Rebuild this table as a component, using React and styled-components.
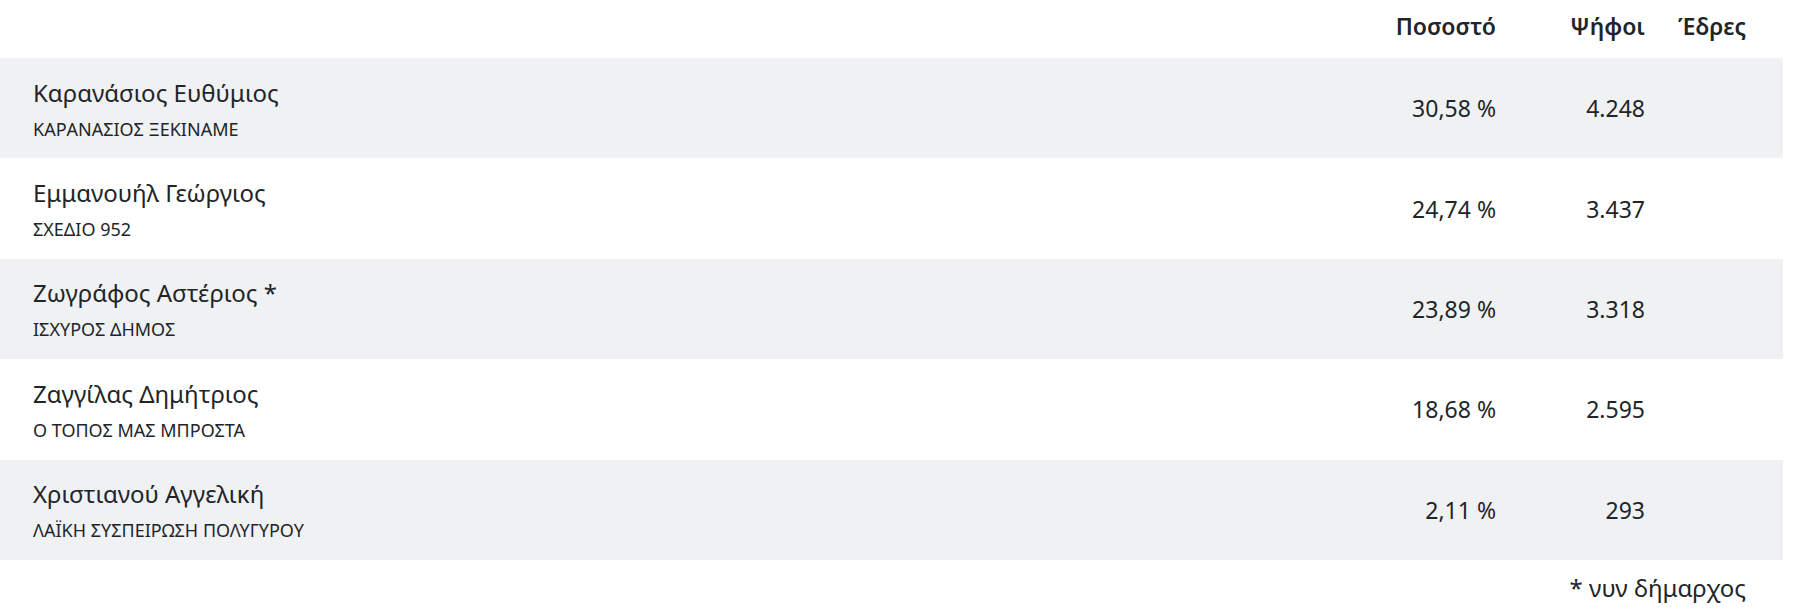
import React from 'react';
import styled, { createGlobalStyle } from 'styled-components';

const GlobalStyle = createGlobalStyle`
  body {
    margin: 0;
    background: #fff;
    font-family: "Noto Sans", "Open Sans", sans-serif;
    color: #212529;
  }
`;

const Table = styled.div`
  width: 1783px;
`;

const Row = styled.div`
  display: grid;
  grid-template-columns: 1fr 160px 149px 101px;
  align-items: center;
  padding: 0 37px 0 33px;
  height: ${(props) => (props.header ? '58px' : '100.4px')};
  background-color: ${(props) => (props.shaded ? '#f0f1f3' : 'transparent')};
`;

const HeadCell = styled.div`
  text-align: right;
  font-size: 23px;
  font-weight: 600;
  padding-bottom: 6px;
`;

const Candidate = styled.div`
  display: flex;
  flex-direction: column;
  padding-top: 2px;
`;

const Name = styled.div`
  font-size: 24px;
  line-height: 32px;
`;

const Party = styled.div`
  font-size: 18px;
  line-height: 26px;
  margin-top: 7px;
`;

const NumCell = styled.div`
  text-align: right;
  font-size: 23px;
`;

const Footnote = styled.div`
  width: 1746px;
  text-align: right;
  font-size: 24px;
  padding-top: 11px;
`;

const results = [
    { name: 'Καρανάσιος Ευθύμιος', party: 'ΚΑΡΑΝΑΣΙΟΣ ΞΕΚΙΝΑΜΕ', pct: '30,58 %', votes: '4.248' },
    { name: 'Εμμανουήλ Γεώργιος', party: 'ΣΧΕΔΙΟ 952', pct: '24,74 %', votes: '3.437' },
    { name: 'Ζωγράφος Αστέριος *', party: 'ΙΣΧΥΡΟΣ ΔΗΜΟΣ', pct: '23,89 %', votes: '3.318' },
    { name: 'Ζαγγίλας Δημήτριος', party: 'Ο ΤΟΠΟΣ ΜΑΣ ΜΠΡΟΣΤΑ', pct: '18,68 %', votes: '2.595' },
    { name: 'Χριστιανού Αγγελική', party: 'ΛΑΪΚΗ ΣΥΣΠΕΙΡΩΣΗ ΠΟΛΥΓΥΡΟΥ', pct: '2,11 %', votes: '293' },
];

function App() {
    return (
        <>
            <GlobalStyle />
            <Table>
                <Row header>
                    <div />
                    <HeadCell>Ποσοστό</HeadCell>
                    <HeadCell>Ψήφοι</HeadCell>
                    <HeadCell>Έδρες</HeadCell>
                </Row>
                {results.map((r, i) => (
                    <Row key={i} shaded={i % 2 === 0}>
                        <Candidate>
                            <Name>{r.name}</Name>
                            <Party>{r.party}</Party>
                        </Candidate>
                        <NumCell>{r.pct}</NumCell>
                        <NumCell>{r.votes}</NumCell>
                        <NumCell />
                    </Row>
                ))}
            </Table>
            <Footnote>* νυν δήμαρχος</Footnote>
        </>
    );
}

export default App;
